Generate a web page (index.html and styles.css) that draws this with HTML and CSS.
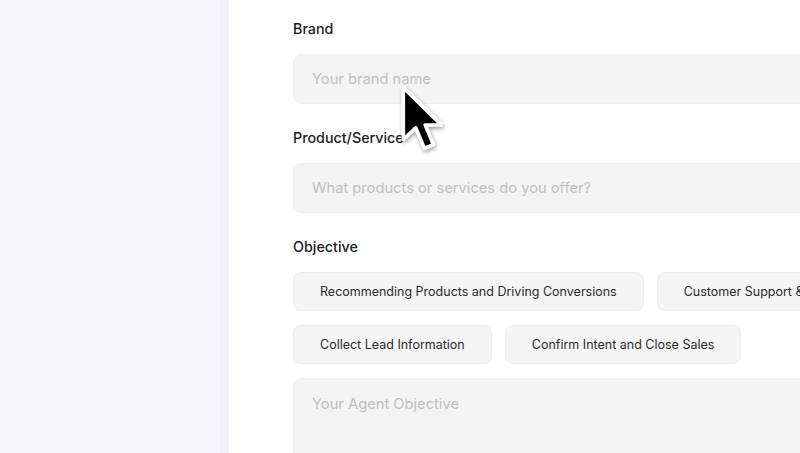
FILE: index.html
```html
<!DOCTYPE html>
<html lang="en">
<head>
<meta charset="utf-8">
<title>Agent setup</title>
<link rel="stylesheet" href="styles.css">
</head>
<body>
<div class="app">
  <aside class="sidebar"><div class="sidebar-edge"></div></aside>
  <main class="main">
    <div class="form">
      <div class="field">
        <div class="label">Brand</div>
        <div class="input"><span class="placeholder">Your brand name</span></div>
      </div>
      <div class="field">
        <div class="label">Product/Service</div>
        <div class="input"><span class="placeholder">What products or services do you offer?</span></div>
      </div>
      <div class="field">
        <div class="label">Objective</div>
        <div class="chips">
          <div class="chip-row">
            <button class="chip">Recommending Products and Driving Conversions</button>
            <button class="chip">Customer Support &amp; FAQ</button>
          </div>
          <div class="chip-row">
            <button class="chip">Collect Lead Information</button>
            <button class="chip">Confirm Intent and Close Sales</button>
          </div>
        </div>
        <div class="textarea"><span class="placeholder">Your Agent Objective</span></div>
      </div>
    </div>
  </main>
  <svg class="cursor" width="51" height="77" viewBox="-2 -2 16 24" aria-hidden="true">
    <defs>
      <filter id="sh" x="-50%" y="-50%" width="200%" height="200%">
        <feDropShadow dx="0.3" dy="0.6" stdDeviation="0.6" flood-color="#000" flood-opacity="0.4"/>
      </filter>
    </defs>
    <path d="M0 0 L0 16.2 L3.9 12.6 L6.6 19 L9.4 17.9 L6.8 11.7 L11.9 11.7 Z" fill="#000" stroke="#fff" stroke-width="1.1" stroke-linejoin="round" filter="url(#sh)"/>
  </svg>
</div>
</body>
</html>
```

FILE: styles.css
```css
* { box-sizing: border-box; }
html, body { margin: 0; padding: 0; }
body {
  font-family: Inter, "Noto Sans", "Liberation Sans", sans-serif;
  background: #ffffff;
  color: #1f1f22;
  width: 800px;
  height: 453px;
  overflow: hidden;
}
.app {
  position: relative;
  display: flex;
  width: 800px;
  height: 453px;
  overflow: hidden;
}
.sidebar {
  width: 229px;
  flex: none;
  background: #f6f5fa;
  display: flex;
  justify-content: flex-end;
}
.sidebar-edge {
  width: 9px;
  background: #f1f0f7;
}
.main {
  flex: 1;
  min-width: 0;
  padding: 19px 0 0 64px;
  overflow: hidden;
}
.form {
  width: 620px;
}
.field {
  margin-bottom: 24px;
}
.label {
  font-size: 14.3px;
  line-height: 20px;
  font-weight: 500;
  color: #1d1d20;
  margin-bottom: 15px;
}
.input, .textarea {
  height: 50px;
  background: #f4f4f4;
  border: 1px solid #efefef;
  border-radius: 8px;
  padding: 0 18px;
  display: flex;
  align-items: center;
}
.textarea {
  height: 120px;
  align-items: flex-start;
  padding-top: 16px;
  margin-top: 14px;
}
.placeholder {
  font-size: 14.7px;
  color: #bfbfc1;
  white-space: nowrap;
}
.chips {
  display: flex;
  flex-direction: column;
  gap: 14px;
}
.chip-row {
  display: flex;
  gap: 13px;
  flex-wrap: nowrap;
}
.chip {
  flex: none;
  height: 39px;
  padding: 0 26px;
  font-family: inherit;
  font-size: 12.5px;
  color: #2a2a2e;
  background: #f5f5f5;
  border: 1px solid #ededed;
  border-radius: 8px;
  white-space: nowrap;
}
.cursor {
  position: absolute;
  left: 397px;
  top: 81px;
  overflow: visible;
}
```
